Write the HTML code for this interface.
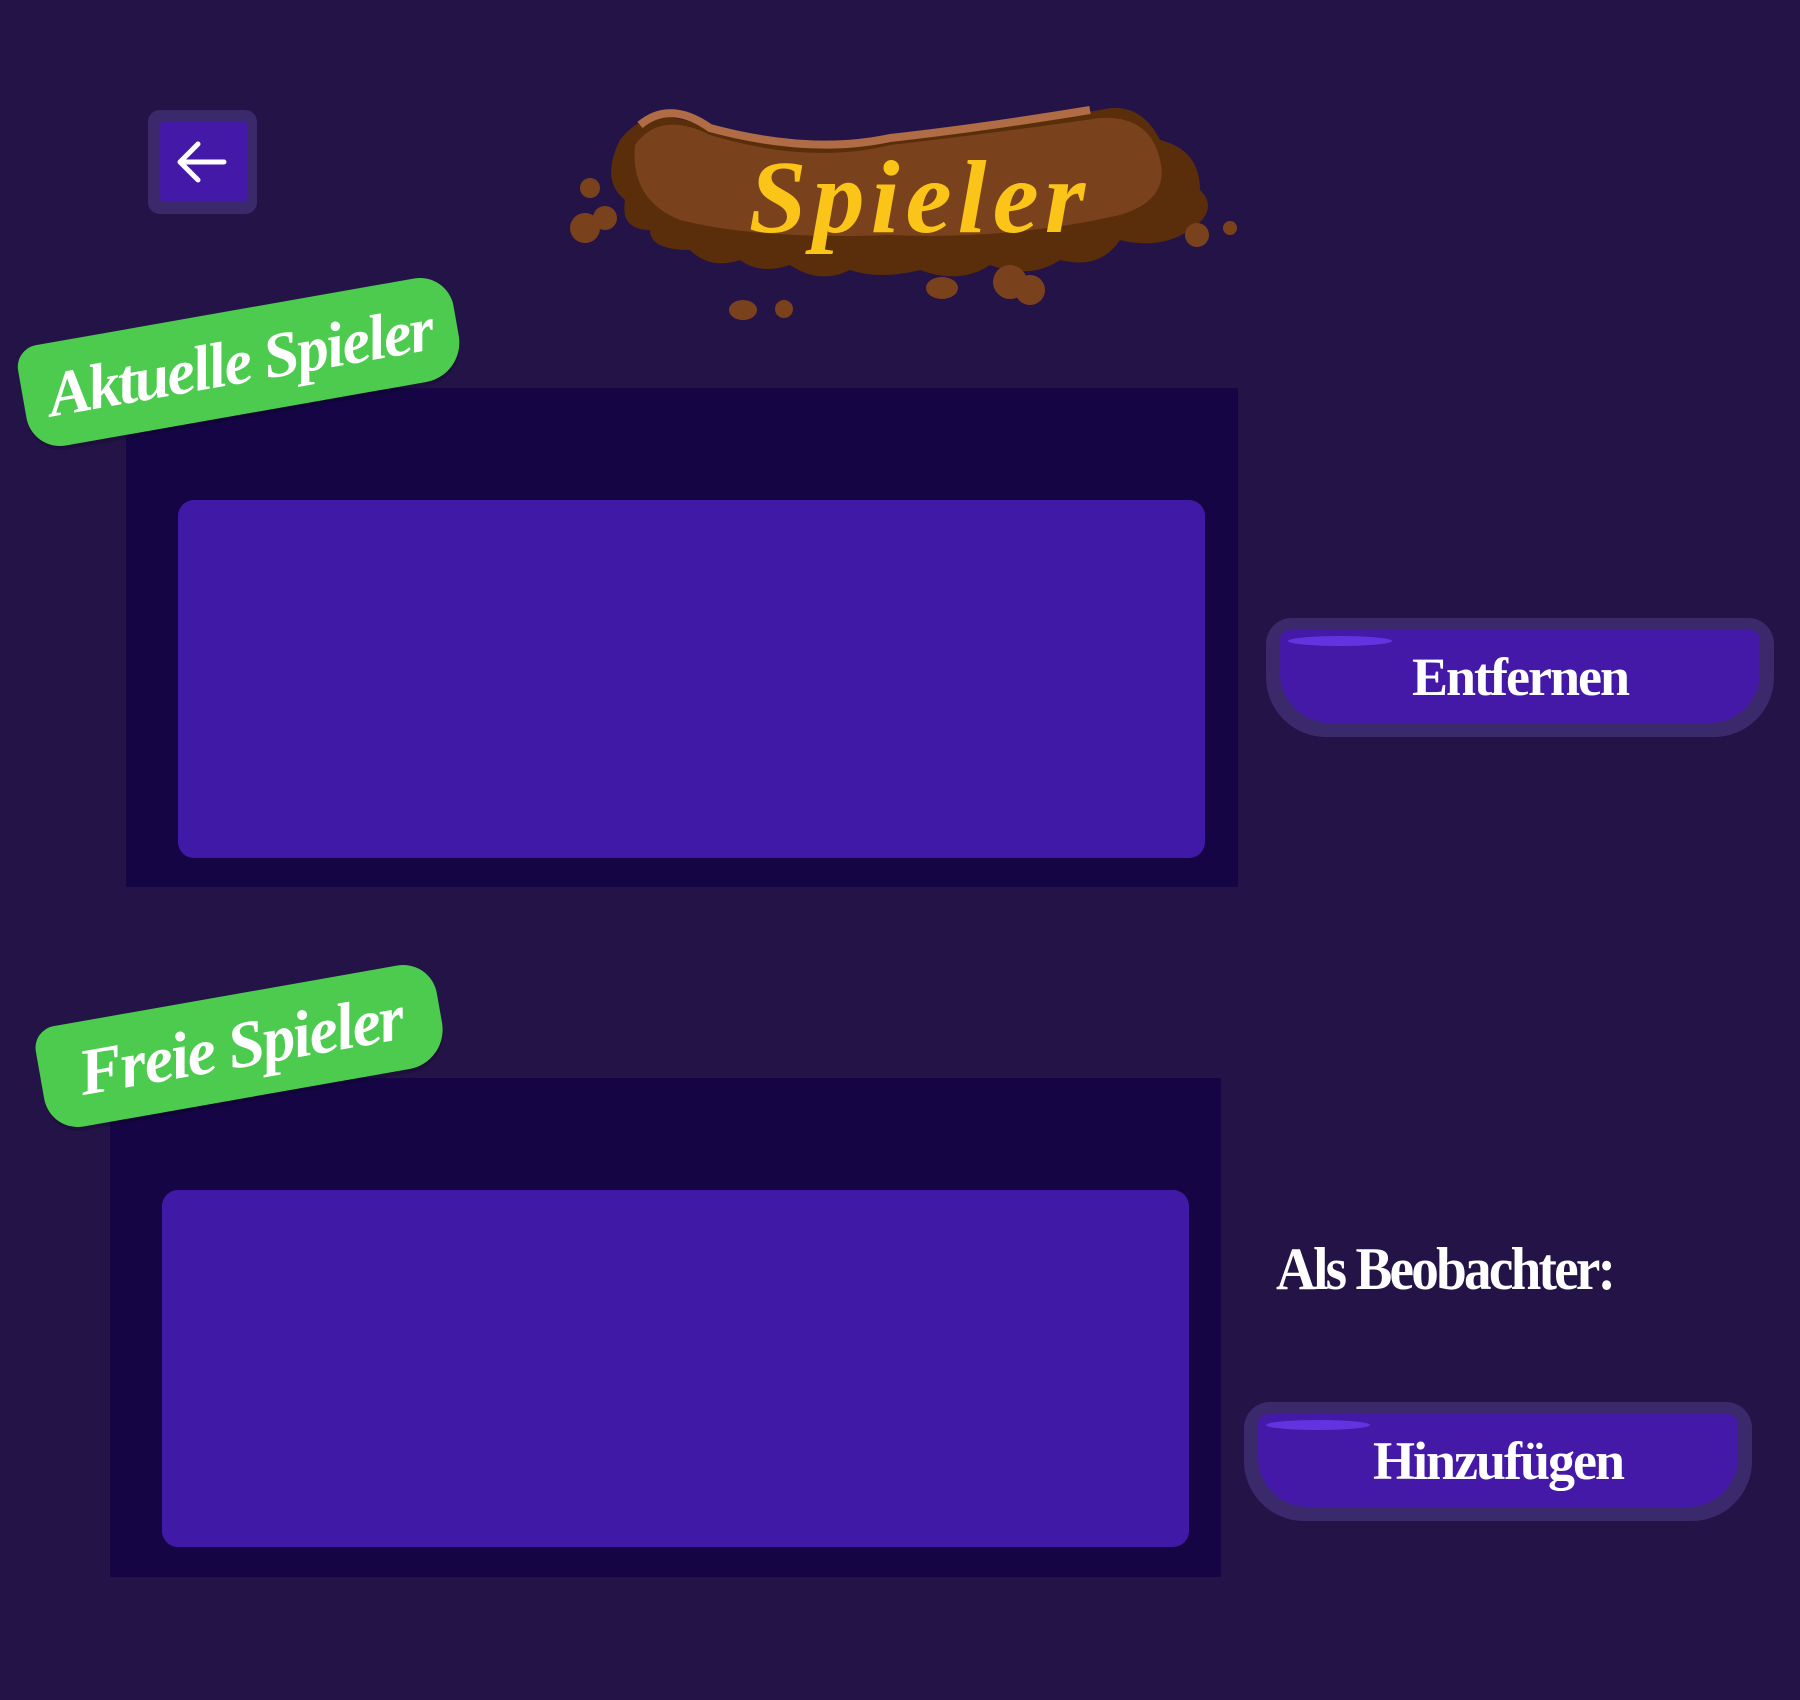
<!DOCTYPE html>
<html><head><meta charset="utf-8"><style>
html,body{margin:0;padding:0}
body{width:1800px;height:1700px;background:#241347;position:relative;overflow:hidden;font-family:"Liberation Sans",sans-serif}
.abs{position:absolute}
.back{left:148px;top:110px;width:109px;height:104px;background:#3b2a6b;border-radius:12px}
.back .in{position:absolute;left:12px;top:12px;width:88px;height:80px;background:#4419a8;border-radius:4px}
.outer{background:#150544}
.inner{background:#4119a7;border-radius:16px}
.label{background:#4ccb4f;color:#fff;font-weight:bold;font-style:italic;border-radius:22px 34px 40px 34px;transform:rotate(-10deg);display:flex;align-items:center;justify-content:center;font-family:"Liberation Serif",serif;letter-spacing:-2px;box-shadow:0 4px 0 rgba(0,0,0,.15)}
.btn{background:#3b2a6b;border-radius:26px 26px 60px 60px}
.btn .in{position:absolute;left:14px;top:12px;right:14px;bottom:14px;background:#4419a8;border-radius:10px 10px 50px 50px;color:#fff;font-family:"Liberation Serif",serif;font-weight:bold;font-size:54px;display:flex;align-items:center;justify-content:center;letter-spacing:-2px}
.btn .hl{position:absolute;left:22px;top:18px;width:104px;height:10px;border-radius:50%;background:#6433e0}
</style></head><body>
<div class="abs back"><div class="in">
<svg width="88" height="80" viewBox="0 0 88 80"><path d="M64 40H20M38 22L20 40l18 18" fill="none" stroke="#fff" stroke-width="5" stroke-linecap="round" stroke-linejoin="round"/></svg></div></div>

<svg class="abs" style="left:560px;top:100px" width="690" height="230" viewBox="0 0 690 230">
<path d="M60 40 Q90 0 150 30 Q250 60 330 40 Q420 30 540 10 Q580 0 600 40 Q640 50 640 90 Q660 110 630 130 Q600 150 560 140 Q540 170 500 160 Q470 180 430 165 Q400 185 360 170 Q320 180 290 170 Q260 185 230 165 Q200 175 180 160 Q150 170 130 150 Q90 150 90 130 Q60 130 65 100 Q40 80 60 40Z" fill="#5a2e0a"/>
<path d="M75 45 Q100 10 150 35 Q250 65 330 45 Q420 35 540 18 Q590 15 600 60 Q610 100 560 115 Q450 140 330 135 Q200 140 120 120 Q70 100 75 45Z" fill="#7a421c"/>
<path d="M80 25 Q110 0 150 28 Q250 55 330 38 Q420 28 530 10" fill="none" stroke="#b06c45" stroke-width="8"/>
<circle cx="30" cy="88" r="10" fill="#7a421c"/><circle cx="25" cy="128" r="15" fill="#7a421c"/><circle cx="45" cy="118" r="12" fill="#7a421c"/>
<circle cx="637" cy="135" r="12" fill="#7a421c"/><circle cx="670" cy="128" r="7" fill="#7a421c"/>
<ellipse cx="382" cy="188" rx="16" ry="11" fill="#7a421c"/><circle cx="450" cy="182" r="17" fill="#7a421c"/><circle cx="470" cy="190" r="15" fill="#7a421c"/>
<ellipse cx="183" cy="210" rx="14" ry="10" fill="#7a421c"/><circle cx="224" cy="209" r="9" fill="#7a421c"/>
<text x="360" y="132" text-anchor="middle" font-family="Liberation Serif,serif" font-weight="bold" font-style="italic" font-size="104" fill="#fbc418" letter-spacing="6">Spieler</text>
</svg>

<div class="abs outer" style="left:126px;top:388px;width:1112px;height:499px"></div>
<div class="abs inner" style="left:178px;top:500px;width:1027px;height:358px"></div>
<div class="abs outer" style="left:110px;top:1078px;width:1111px;height:499px"></div>
<div class="abs inner" style="left:162px;top:1190px;width:1027px;height:357px"></div>

<div class="abs label" style="left:20px;top:310px;width:440px;height:104px;font-size:64px">Aktuelle Spieler</div>
<div class="abs label" style="left:38px;top:994px;width:405px;height:104px;font-size:66px">Freie Spieler</div>

<div class="abs btn" style="left:1266px;top:618px;width:508px;height:119px"><div class="in">Entfernen</div><div class="hl"></div></div>
<div class="abs" style="left:1276px;top:1235px;color:#fff;font-family:'Liberation Serif',serif;font-weight:bold;font-size:60px;letter-spacing:-3px;transform:scaleX(0.92);transform-origin:left">Als Beobachter:</div>
<div class="abs btn" style="left:1244px;top:1402px;width:508px;height:119px"><div class="in">Hinzufügen</div><div class="hl"></div></div>
</body></html>
